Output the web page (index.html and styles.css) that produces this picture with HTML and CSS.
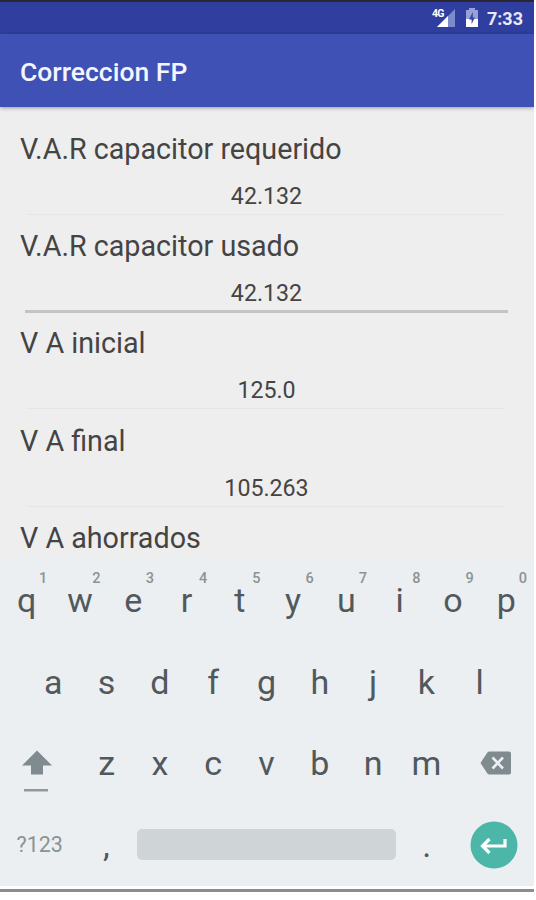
FILE: index.html
```html
<!DOCTYPE html>
<html lang="es">
<head>
    <meta charset="UTF-8">
    <meta name="viewport" content="width=device-width, initial-scale=1.0">
    <title>Correccion FP</title>
    <link rel="stylesheet" href="styles.css">
</head>
<body>
    <div class="phone">
        <!-- Status bar -->
        <div class="status-bar">
            <svg class="signal" width="24" height="20" viewBox="0 0 24 20">
                <path d="M23 1V19H5z" fill="#7c89cb"/>
                <path d="M16 8V19H5z" fill="#fff"/>
                <text x="0" y="9" class="network">4G</text>
            </svg>
            <svg class="battery" width="14" height="20" viewBox="0 0 14 20">
                <path d="M4 0h6v2h3v17H1V2h3z" fill="#97a1d6"/>
                <path d="M1 11h12v8H1z" fill="#fff"/>
                <path d="M7.8 4L4 11.5h2.6V16L10 9.5H7.8z" fill="#3947a3"/>
            </svg>
            <span class="clock">7:33</span>
        </div>

        <header class="app-bar">
            <h1>Correccion FP</h1>
        </header>

        <!-- Results form -->
        <main class="content">
            <div class="field">
                <div class="label">V.A.R capacitor requerido</div>
                <div class="value">42.132</div>
            </div>
            <div class="field">
                <div class="label">V.A.R capacitor usado</div>
                <div class="value focused">42.132</div>
            </div>
            <div class="field">
                <div class="label">V A inicial</div>
                <div class="value">125.0</div>
            </div>
            <div class="field">
                <div class="label">V A final</div>
                <div class="value">105.263</div>
            </div>
            <div class="field">
                <div class="label">V A ahorrados</div>
            </div>
        </main>

        <!-- Keyboard -->
        <div class="keyboard">
            <div class="row">
                <div class="key">q<span class="hint">1</span></div>
                <div class="key">w<span class="hint">2</span></div>
                <div class="key">e<span class="hint">3</span></div>
                <div class="key">r<span class="hint">4</span></div>
                <div class="key">t<span class="hint">5</span></div>
                <div class="key">y<span class="hint">6</span></div>
                <div class="key">u<span class="hint">7</span></div>
                <div class="key">i<span class="hint">8</span></div>
                <div class="key">o<span class="hint">9</span></div>
                <div class="key">p<span class="hint">0</span></div>
            </div>
            <div class="row">
                <div class="key">a</div>
                <div class="key">s</div>
                <div class="key">d</div>
                <div class="key">f</div>
                <div class="key">g</div>
                <div class="key">h</div>
                <div class="key">j</div>
                <div class="key">k</div>
                <div class="key">l</div>
            </div>
            <div class="row">
                <div class="key wide shift">
                    <svg width="32" height="44" viewBox="0 0 32 44">
                        <path d="M16 0.500L31 15.500H22V24.500H10V15.500H1z" fill="#7f8b8f"/>
                        <path d="M3 39H27V41.500H3z" fill="#8f999c"/>
                    </svg>
                </div>
                <div class="key">z</div>
                <div class="key">x</div>
                <div class="key">c</div>
                <div class="key">v</div>
                <div class="key">b</div>
                <div class="key">n</div>
                <div class="key">m</div>
                <div class="key wide delete">
                    <svg width="32" height="24" viewBox="0 0 32 24">
                        <path d="M9.500 0.500H29a2 2 0 0 1 2 2V21.500a2 2 0 0 1-2 2H9.500a3 3 0 0 1-2.300-1.200L0.500 12 7.200 1.700A3 3 0 0 1 9.500 0.500z" fill="#7f8b8f"/>
                        <path d="M12.500 6.500L23 17.500M23 6.500L12.500 17.500" stroke="#eceff1" stroke-width="2.600"/>
                    </svg>
                </div>
            </div>
            <div class="row">
                <div class="key wide symbols">?123</div>
                <div class="key comma">,</div>
                <div class="space"></div>
                <div class="key period">.</div>
                <div class="key wide enter">
                    <svg width="48" height="48" viewBox="0 0 48 48">
                        <circle cx="24" cy="24" r="23.500" fill="#4cb6a9"/>
                        <path d="M35 18V25H14M19.500 18L12.500 25L19.500 32" fill="none" stroke="#fff" stroke-width="3.200"/>
                    </svg>
                </div>
            </div>
        </div>
    </div>
</body>
</html>
```

FILE: styles.css
```css
/* General styling */
body {
    margin: 0;
    background-color: #fff;
    font-family: Roboto, sans-serif;
}
.phone {
    width: 534px;
    box-sizing: border-box;
    height: 892px;
    border-top: 2px solid #2b2633;
    border-bottom: 3px solid #8a8d8e;
    overflow: hidden;
}
.status-bar {
    display: flex;
    justify-content: flex-end;
    align-items: center;
    height: 32px;
    padding-right: 11px;
    box-sizing: border-box;
    background-color: #303f9f;
    color: #e8eaf8;
}
.network {
    font-size: 10.5px;
    font-weight: 700;
    letter-spacing: -0.8px;
    fill: #fff;
}
.signal {
    margin-right: 9px;
}
.battery {
    margin-right: 8px;
}
.clock {
    font-size: 18px;
    font-weight: 700;
}
.app-bar {
    position: relative;
    height: 73px;
    background-color: #3f51b5;
    box-shadow: 0 1px 4px rgba(0, 0, 0, 0.35);
}
.app-bar h1 {
    margin: 0;
    padding-left: 20px;
    font-size: 26.5px;
    font-weight: 500;
    line-height: 76px;
    color: #f4f5ff;
}
/* Form */
.content {
    height: 450px;
    padding: 24px 26px 0 20px;
    box-sizing: border-box;
    background-color: #eee;
    overflow: hidden;
}
.field {
    height: 97.2px;
}
.label {
    font-size: 28.7px;
    line-height: 37px;
    color: #444;
    white-space: nowrap;
}
.value {
    height: 37px;
    margin: 9px 4px 0 7px;
    padding-left: 2px;
    border-bottom: 1px solid #e6e6e6;
    font-size: 23.2px;
    line-height: 39px;
    text-align: center;
    color: #444;
}
.value.focused {
    height: 36px;
    margin: 9px 0 0 5px;
    padding-left: 0;
    border-bottom: 3px solid #c4c4c4;
}
/* Keyboard */
.keyboard {
    height: 329px;
    padding-top: 2px;
    box-sizing: border-box;
    background-color: #eceff1;
}
.row {
    display: flex;
    justify-content: center;
    align-items: center;
    height: 81.7px;
    margin-left: -1px;
}
.key {
    position: relative;
    width: 53.3px;
    font-size: 34px;
    line-height: 84px;
    text-align: center;
    color: #51595d;
}
.hint {
    position: absolute;
    top: 13px;
    right: 6px;
    font-size: 14.5px;
    font-weight: 500;
    line-height: 16px;
    color: #8b9396;
}
.wide {
    width: 80px;
}
.shift svg,
.delete svg,
.enter svg {
    display: block;
    margin: 0 auto;
}
.shift svg {
    margin: 18px 0 0 21px;
}
.delete svg {
    margin-left: 27px;
}
.enter svg {
    margin-left: 17px;
}
.symbols {
    font-size: 21.5px;
    color: #8b9396;
}
.space {
    width: 259px;
    height: 31px;
    margin: 0 4px;
    border-radius: 5px;
    background-color: #cfd4d6;
}
```
